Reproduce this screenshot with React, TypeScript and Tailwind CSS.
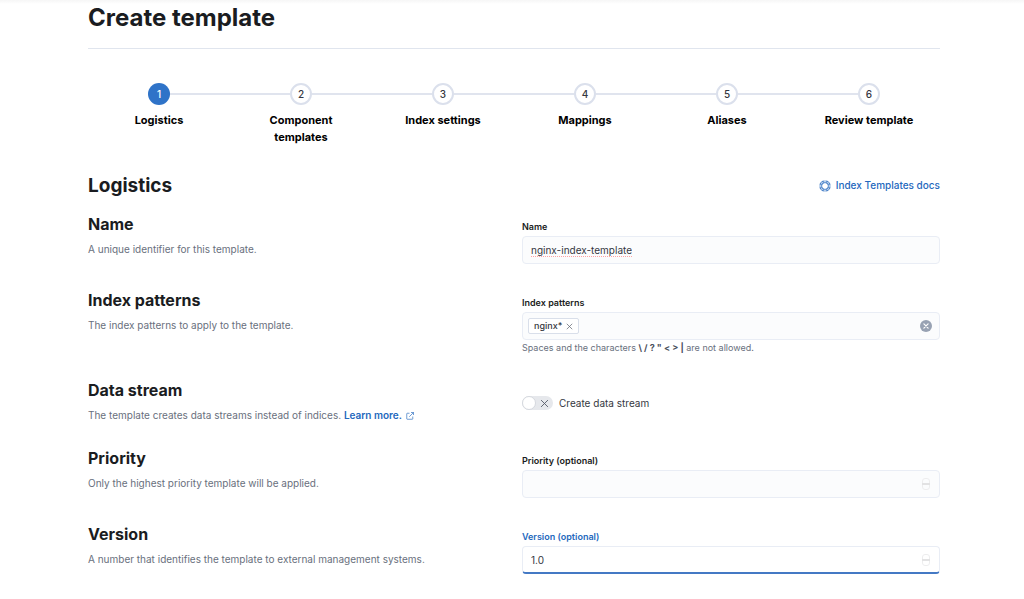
import { useState } from 'react'
import type { ReactNode } from 'react'

const steps = ['Logistics', 'Component templates', 'Index settings', 'Mappings', 'Aliases', 'Review template']

const labelText = 'mb-[3px] block text-[9px] leading-3 font-semibold'
const inputBox = 'block h-7 w-full rounded-[4px] border border-[#e9edf5] text-[10px] text-[#343741] outline-none'

function CrossIcon({ className }: { className?: string }) {
  return (
    <svg viewBox="0 0 10 10" className={className} fill="none" stroke="currentColor" strokeLinecap="round" aria-hidden="true">
      <path d="M1.5 1.5l7 7M8.5 1.5l-7 7" />
    </svg>
  )
}

function HelpIcon() {
  return (
    <svg viewBox="0 0 16 16" className="size-3" fill="none" stroke="currentColor" aria-hidden="true">
      <circle cx="8" cy="8" r="4.6" strokeWidth="1.1" />
      <path d="M5.5 1.4h5M5.5 14.6h5M1.4 5.5v5M14.6 5.5v5" strokeWidth="0.8" />
      <path
        d="M5.5 4.4V1.3A7.2 7.2 0 0 0 1.3 5.5h3.1M10.5 4.4V1.3A7.2 7.2 0 0 1 14.7 5.5h-3.1M5.5 11.6v3.1A7.2 7.2 0 0 1 1.3 10.5h3.1M10.5 11.6v3.1A7.2 7.2 0 0 0 14.7 10.5h-3.1"
        strokeWidth="1.1"
      />
    </svg>
  )
}

function PopoutIcon() {
  return (
    <svg viewBox="0 0 16 16" className="ml-1 inline size-2 align-[-1px]" fill="none" stroke="currentColor" strokeWidth="1.3" aria-hidden="true">
      <path d="M7 2.5H2.5a1 1 0 0 0-1 1v10a1 1 0 0 0 1 1h10a1 1 0 0 0 1-1V9M10 1h5v5M15 1L6.5 9.5" />
    </svg>
  )
}

function StepperIcon() {
  return (
    <svg viewBox="0 0 8 12" className="pointer-events-none absolute top-2 right-[10px] h-3 w-2" fill="none" aria-hidden="true">
      <path d="M.5 5V3A2.5 2.5 0 0 1 3 .5h2A2.5 2.5 0 0 1 7.5 3v2M.5 7v2A2.5 2.5 0 0 0 3 11.5h2A2.5 2.5 0 0 0 7.5 9V7" stroke="#ededee" />
      <path d="M0 6h8" stroke="#e2e2e3" strokeWidth="2" />
    </svg>
  )
}

function Row({ title, text, children, className }: { title: string; text: ReactNode; children: ReactNode; className: string }) {
  return (
    <section className={`grid grid-cols-2 gap-4 ${className}`}>
      <div>
        <h3 className="text-[16px] leading-[23px] font-bold">{title}</h3>
        <p className="mt-[5px] text-[10px] leading-[17px] text-[#69707d]">{text}</p>
      </div>
      <div className="pt-2">{children}</div>
    </section>
  )
}

export default function App() {
  const [patterns, setPatterns] = useState(['nginx*'])
  const [dataStream, setDataStream] = useState(false)

  return (
    <main className="bg-white pr-[84px] pl-[88px] font-['Inter',sans-serif] text-[#1a1c21]">
      <div className="-mr-[84px] -ml-[88px] h-1 bg-linear-to-b from-[#f6f6f6] to-white" />
      <header className="border-b border-[#e0e5ee] pb-4">
        <h1 className="text-[24px] leading-7 font-bold">Create template</h1>
      </header>

      <ol className="mt-[34px] grid grid-cols-6">
        {steps.map((step, i) => (
          <li key={step}>
            <button type="button" className="flex w-full flex-col items-center text-[11px] leading-[17px] font-bold text-black">
              <span className="flex w-full items-center">
                <span className={`h-[2px] flex-1 ${i === 0 ? '' : 'bg-[#e0e4ee]'}`} />
                <span
                  className={`flex size-[22px] items-center justify-center rounded-full text-[10px] font-medium ${
                    i === 0 ? 'bg-[#2f73c8] text-white' : 'border-2 border-[#dbe0ec] bg-white text-[#343741]'
                  }`}
                >
                  {i + 1}
                </span>
                <span className={`h-[2px] flex-1 ${i === steps.length - 1 ? '' : 'bg-[#e0e4ee]'}`} />
              </span>
              <span className="mt-[7px] max-w-[96px]">{step}</span>
            </button>
          </li>
        ))}
      </ol>

      <form onSubmit={(e) => e.preventDefault()}>
        <div className="mt-[26px] flex items-center justify-between">
          <h2 className="text-[19px] leading-[27px] font-bold">Logistics</h2>
          <a href="#docs" className="flex items-center gap-[5px] text-[10px] font-medium text-[#2468bd]">
            <HelpIcon />
            Index Templates docs
          </a>
        </div>

        <Row title="Name" text="A unique identifier for this template." className="mt-[14px] min-h-[76px]">
          <label htmlFor="name" className={labelText}>Name</label>
          <div className={`${inputBox} flex! items-center bg-[#fbfcfd] px-2`}>
            {/* sized to its content so the dotted line stops with the text */}
            <input
              id="name"
              defaultValue="nginx-index-template"
              spellCheck={false}
              className="h-[13px] max-w-full min-w-4 border-b border-dotted border-red-300 leading-3 outline-none [field-sizing:content]"
            />
          </div>
        </Row>

        <Row title="Index patterns" text="The index patterns to apply to the template." className="min-h-[90px]">
          <label htmlFor="patterns" className={labelText}>Index patterns</label>
          <div className={`${inputBox} flex! items-center bg-[#fbfcfd] pr-[7px] pl-[5px]`}>
            {patterns.map((p) => (
              <span key={p} className="flex h-4 items-center gap-1 rounded-[2px] border border-[#d9dfea] bg-white px-[5px] text-[9px] font-medium">
                {p}
                <button type="button" aria-label={`Remove ${p}`} onClick={() => setPatterns(patterns.filter((x) => x !== p))}>
                  <CrossIcon className="size-[7px] text-[#5a606b]" />
                </button>
              </span>
            ))}
            <input id="patterns" className="min-w-0 flex-1 bg-transparent px-1 outline-none" />
            <button
              type="button"
              aria-label="Clear patterns"
              onClick={() => setPatterns([])}
              className="flex size-3 items-center justify-center rounded-full bg-[#98a2b3] text-white"
            >
              <CrossIcon className="size-[6px] stroke-2" />
            </button>
          </div>
          <p className="mt-px text-[9px] leading-[14px] text-[#69707d]">
            Spaces and the characters <strong className="text-[#4a505c]">{'\\ / ? " < > |'}</strong> are not allowed.
          </p>
        </Row>

        <Row
          title="Data stream"
          text={
            <>
              The template creates data streams instead of indices.{' '}
              <a href="#data-streams" className="font-semibold text-[#2468bd]">
                Learn more.
                <PopoutIcon />
              </a>
            </>
          }
          className="min-h-[68px]"
        >
          <div className="flex items-center gap-[6px] pt-[9px]">
            <button
              id="data-stream"
              type="button"
              role="switch"
              aria-checked={dataStream}
              onClick={() => setDataStream(!dataStream)}
              className={`flex h-[14px] w-[31px] items-center justify-between rounded-full pr-1 ${dataStream ? 'flex-row-reverse bg-[#2f73c8]' : 'bg-[#e6e8ec]'}`}
            >
              <span className="size-[14px] rounded-full border border-[#d5d8de] bg-white" />
              <CrossIcon className="size-[9px] text-[#535966]" />
            </button>
            <label htmlFor="data-stream" className="text-[10px] leading-[14px] text-[#343741]">Create data stream</label>
          </div>
        </Row>

        <Row title="Priority" text="Only the highest priority template will be applied." className="min-h-[76px]">
          <label htmlFor="priority" className={labelText}>Priority (optional)</label>
          <div className="relative">
            <input id="priority" type="number" className={`${inputBox} [appearance:textfield] bg-[#fbfcfd] px-2`} />
            <StepperIcon />
          </div>
        </Row>

        <Row title="Version" text="A number that identifies the template to external management systems." className="min-h-[76px]">
          <label htmlFor="version" className={`${labelText} text-[#2468bd]`}>Version (optional)</label>
          <div className="relative">
            <input
              id="version"
              type="number"
              step="0.1"
              defaultValue="1.0"
              className={`${inputBox} [appearance:textfield] border-b-2 border-b-[#4479c4] bg-white px-2`}
            />
            <StepperIcon />
          </div>
        </Row>
      </form>
    </main>
  )
}
